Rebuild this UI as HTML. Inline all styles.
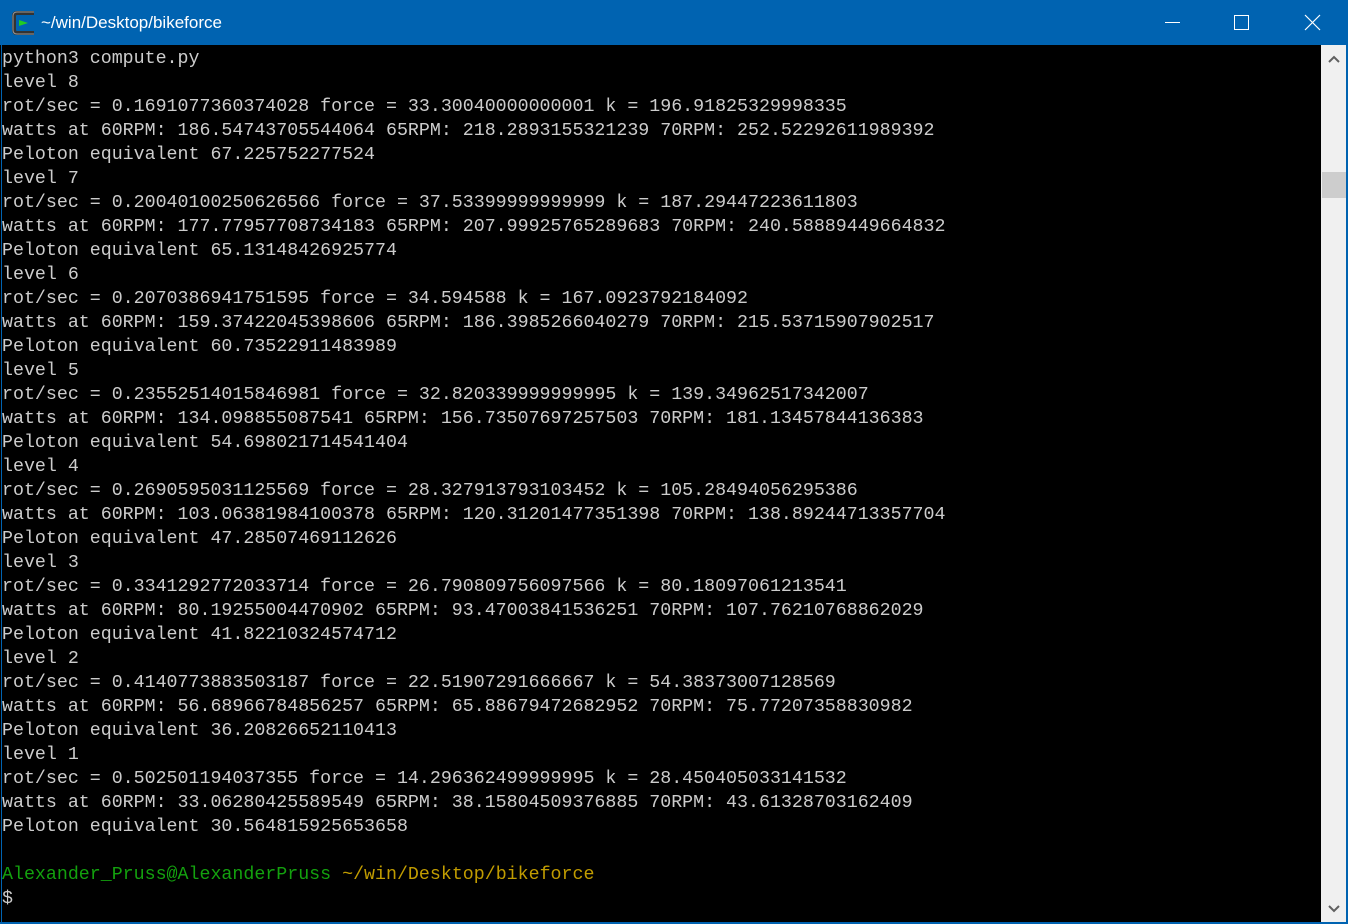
<!DOCTYPE html>
<html><head><style>
html,body{margin:0;padding:0;width:1348px;height:924px;overflow:hidden;background:#000}
.tb{position:absolute;left:0;top:0;width:1348px;height:45px;background:#0063b1;color:#fff;font-family:"Liberation Sans",sans-serif;font-size:17px}
.tb .t{position:absolute;left:41px;top:13px}
.term{position:absolute;left:1px;top:45px;width:1320px;height:878px;background:#000;border-left:1px solid #0063b1}
pre{margin:0;padding:2px 0 0 0;font-family:"Liberation Mono",monospace;font-size:18.3px;line-height:24px;color:#cccccc;white-space:pre}
.g{color:#13a10e}.y{color:#c19c00}
.sb{position:absolute;left:1321px;top:45px;width:25px;height:878px;background:#f0f0f0}
.th{position:absolute;left:1px;top:127px;width:24px;height:26px;background:#cdcdcd}
.rb{position:absolute;left:1346px;top:0;width:2px;height:924px;background:#0063b1}
.bb{position:absolute;left:0;top:922px;width:1348px;height:2px;background:#0063b1}
</style></head><body>
<div class="tb">
<svg style="position:absolute;left:11px;top:10px" width="26" height="26" viewBox="0 0 26 26"><path d="M23 3H6Q3 3 3 6V20Q3 23 6 23H23" fill="none" stroke="#333" stroke-width="4"/><path d="M23 2H6Q2 2 2 6V20Q2 24 6 24H23" fill="none" stroke="#999" stroke-width="1"/><path d="M8 10L17 13L8 16Z" fill="#2c2"/></svg>
<span class="t">~/win/Desktop/bikeforce</span>
<svg style="position:absolute;left:1164px;top:14px" width="170" height="18"><path d="M1 8.5H16" stroke="#fff" stroke-width="1"/><rect x="70.5" y="1.5" width="14" height="14" fill="none" stroke="#fff"/><path d="M141 1L156 16M156 1L141 16" stroke="#fff" stroke-width="1.2"/></svg>
</div>
<div class="term"><pre>python3 compute.py
level 8
rot/sec = 0.1691077360374028 force = 33.30040000000001 k = 196.91825329998335
watts at 60RPM: 186.54743705544064 65RPM: 218.2893155321239 70RPM: 252.52292611989392
Peloton equivalent 67.225752277524
level 7
rot/sec = 0.20040100250626566 force = 37.53399999999999 k = 187.29447223611803
watts at 60RPM: 177.77957708734183 65RPM: 207.99925765289683 70RPM: 240.58889449664832
Peloton equivalent 65.13148426925774
level 6
rot/sec = 0.2070386941751595 force = 34.594588 k = 167.0923792184092
watts at 60RPM: 159.37422045398606 65RPM: 186.3985266040279 70RPM: 215.53715907902517
Peloton equivalent 60.73522911483989
level 5
rot/sec = 0.23552514015846981 force = 32.820339999999995 k = 139.34962517342007
watts at 60RPM: 134.098855087541 65RPM: 156.73507697257503 70RPM: 181.13457844136383
Peloton equivalent 54.698021714541404
level 4
rot/sec = 0.2690595031125569 force = 28.327913793103452 k = 105.28494056295386
watts at 60RPM: 103.06381984100378 65RPM: 120.31201477351398 70RPM: 138.89244713357704
Peloton equivalent 47.28507469112626
level 3
rot/sec = 0.3341292772033714 force = 26.790809756097566 k = 80.18097061213541
watts at 60RPM: 80.19255004470902 65RPM: 93.47003841536251 70RPM: 107.76210768862029
Peloton equivalent 41.82210324574712
level 2
rot/sec = 0.4140773883503187 force = 22.51907291666667 k = 54.38373007128569
watts at 60RPM: 56.68966784856257 65RPM: 65.88679472682952 70RPM: 75.77207358830982
Peloton equivalent 36.20826652110413
level 1
rot/sec = 0.502501194037355 force = 14.296362499999995 k = 28.450405033141532
watts at 60RPM: 33.06280425589549 65RPM: 38.15804509376885 70RPM: 43.61328703162409
Peloton equivalent 30.564815925653658

<span class="g">Alexander_Pruss@AlexanderPruss</span> <span class="y">~/win/Desktop/bikeforce</span>
$</pre></div>
<div class="sb">
<svg style="position:absolute;left:7px;top:10px" width="12" height="8"><path d="M1 7L6 2L11 7" fill="none" stroke="#606060" stroke-width="2"/></svg>
<div class="th"></div>
<svg style="position:absolute;left:7px;top:860px" width="12" height="8"><path d="M1 1L6 6L11 1" fill="none" stroke="#606060" stroke-width="2"/></svg>
</div>
<div class="rb"></div><div class="bb"></div>
</body></html>
